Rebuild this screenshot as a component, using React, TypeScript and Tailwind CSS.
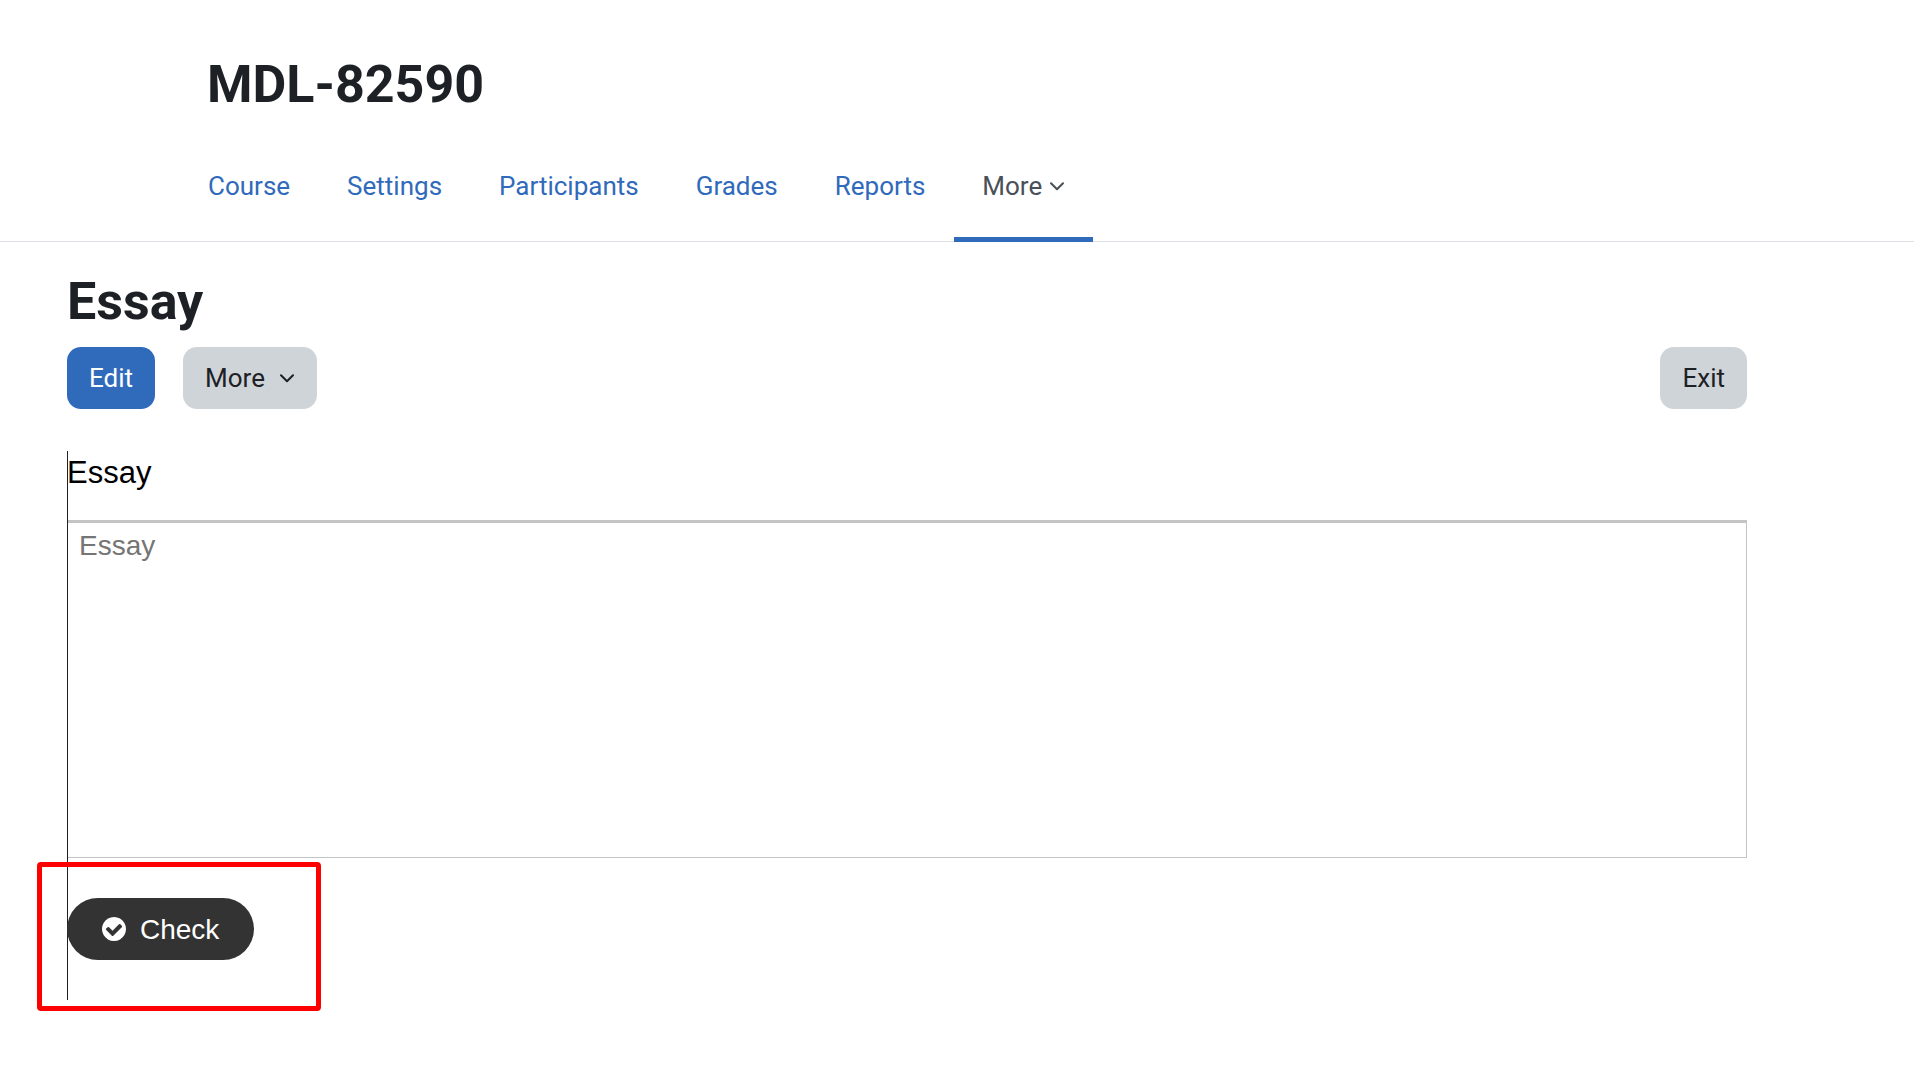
import clsx from "clsx";

const tabs = ["Course", "Settings", "Participants", "Grades", "Reports"];

const ChevronDown = () => (
  <svg width="15" height="9" viewBox="0 0 15 9" fill="none" aria-hidden="true">
    <path
      d="M1 1.2L7 7.2L13 1.2"
      stroke="currentColor"
      strokeWidth="2"
      strokeLinecap="round"
      strokeLinejoin="round"
    />
  </svg>
);

const CheckCircle = () => (
  <svg width="24" height="24" viewBox="128 128 1536 1536" fill="currentColor" aria-hidden="true">
    <path d="M1412 734q0-28-18-46l-91-90q-19-19-45-19t-45 19l-408 407-226-226q-19-19-45-19t-45 19l-91 90q-18 18-18 46 0 27 18 45l362 362q19 19 45 19 27 0 46-19l543-543q18-18 18-45zm252 162q0 209-103 385.5t-279.5 279.5-385.5 103-385.5-103-279.5-279.5-103-385.5 103-385.5 279.5-279.5 385.5-103 385.5 103 279.5 279.5 103 385.5z" />
  </svg>
);

interface ButtonProps {
  children: React.ReactNode;
  primary?: boolean;
}

const Button = ({ children, primary }: ButtonProps) => (
  <button
    type="button"
    className={clsx(
      "flex h-[62px] items-center gap-[15px] rounded-[14px] px-[22px]",
      primary ? "bg-[#306abb] text-white" : "bg-[#ced4d8] text-[#1d2125]"
    )}
  >
    {children}
  </button>
);

const CourseHeader = () => (
  <header className="border-b border-[#dee2e6] pt-[54px]">
    <h1 className="pl-[207px] text-[52px] leading-[62px] font-bold">MDL-82590</h1>
    <nav className="-mb-px flex gap-px pt-[15px] pl-[180px] text-[#306abb]">
      {tabs.map((tab) => (
        <a key={tab} href="#" className="flex h-[111px] items-center border-b-5 border-transparent px-7 pt-1">
          {tab}
        </a>
      ))}
      <button
        type="button"
        className="flex h-[111px] items-center gap-2 border-b-5 border-[#306abb] px-7 pt-1 text-[#495057]"
      >
        More
        <ChevronDown />
      </button>
    </nav>
  </header>
);

const EssayActivity = () => (
  <section className="relative pb-10 font-['Liberation_Sans',Arial,sans-serif]">
    {/* left rule over the full activity height */}
    <div className="pointer-events-none absolute inset-y-0 left-0 w-px bg-[#1d2125]" />
    <label htmlFor="essay" className="block h-[69px] pt-1 text-[31px] leading-9 text-black">
      Essay
    </label>
    <textarea
      id="essay"
      placeholder="Essay"
      className="block h-[338px] w-full resize-none border-t-3 border-r border-b border-[#c4c4c4] px-3 py-[5px] text-[28px] leading-9 placeholder:text-[#757575]"
    />
    <div className="relative pt-10">
      <button
        type="button"
        className="flex h-[62px] items-center gap-[14px] rounded-full bg-[#333] px-[35px] text-[28px] text-white"
      >
        <CheckCircle />
        Check
      </button>
      {/* highlight around the check button */}
      <div className="pointer-events-none absolute top-1 -left-[30px] h-[149px] w-[284px] rounded-[4px] border-5 border-[#ff0000]" />
    </div>
  </section>
);

export default function App() {
  return (
    <div className="min-h-screen bg-white font-['Roboto',sans-serif] text-[26px] leading-[39px] text-[#1d2125]">
      <CourseHeader />
      <main className="pt-[29px] pr-[167px] pl-[67px]">
        <h2 className="text-[52px] leading-[62px] font-bold">Essay</h2>
        <div className="flex gap-7 pt-[14px] pb-[42px]">
          <Button primary>Edit</Button>
          <Button>
            More
            <ChevronDown />
          </Button>
          <div className="ml-auto">
            <Button>Exit</Button>
          </div>
        </div>
        <EssayActivity />
      </main>
    </div>
  );
}
